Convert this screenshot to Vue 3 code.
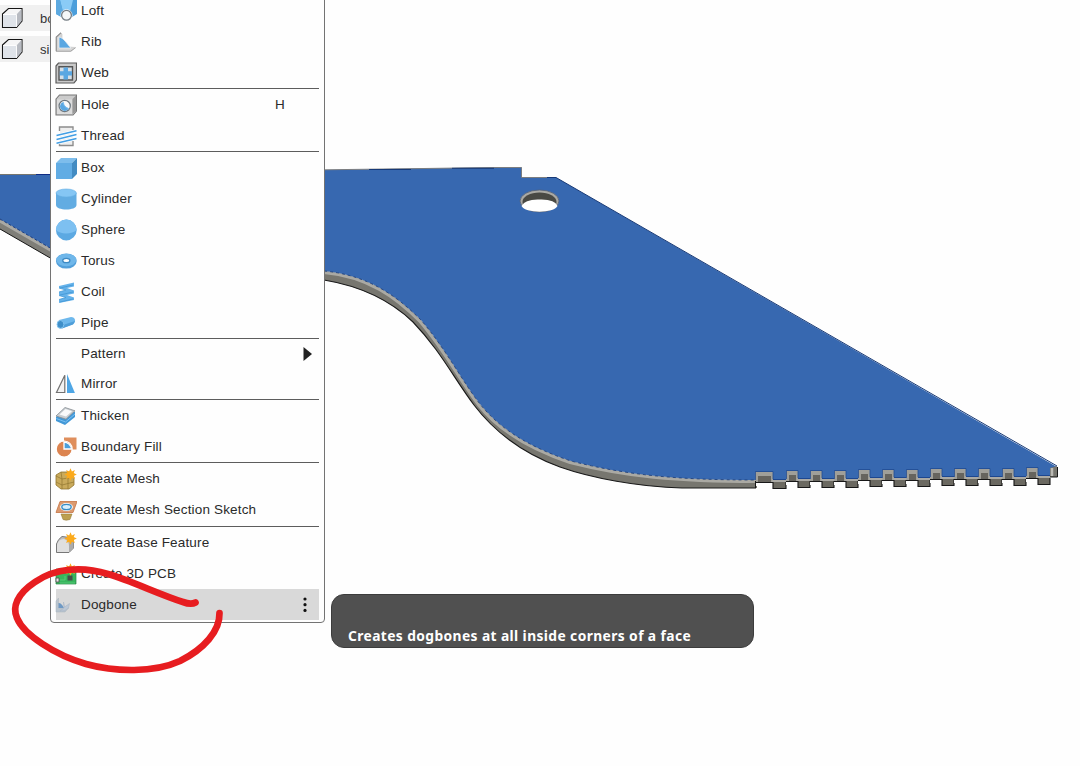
<script setup>
const blue = '#5aa7e2'
const light = '#86c5f4'
const p = (d, fill = 'none', stroke = 'none', w = 1) => ({ d, fill, stroke, w })
const circle = (x, y, r) => `M${x - r} ${y}a${r} ${r} 0 1 0 ${2 * r} 0a${r} ${r} 0 1 0 ${-2 * r} 0Z`
const ellipse = (x, y, a, b) => `M${x - a} ${y}a${a} ${b} 0 1 0 ${2 * a} 0a${a} ${b} 0 1 0 ${-2 * a} 0Z`
const star = p('M15.5 0.2l1.4 3.2 3-1.3-1.2 3 3.1 1.4-3.1 1.4 1.2 3-3-1.2-1.4 3-1.4-3-3 1.2 1.2-3-3-1.4 3-1.4-1.2-3 3 1.3Z', '#fbaa1c')

const icons = {
  loft: [p('M1 0H22V14L17 17H6L1 14Z', '#4b9edb'), p('M5 0H18L15.500 10H7.500Z', '#8acbf6'), p('M1 0H5L7.500 10 5.500 16 1 14Z', '#5ca9e0'), p(circle(11.5, 15.2, 6), '#fefefe'), p(circle(11.5, 15.2, 4.9), '#f5f7f8', '#757d84', 1.3)],
  rib: [p('M1 6L5.5 1.5 7 3V15.5L20.5 16.5 16 20.5H1Z', '#d6d6d6', '#c3c3c3', 0.6), p('M1.3 20V6L6 1.8', 'none', '#8f8f8f', 1.1), p('M1 20.2H15.5L20.5 16.8', 'none', '#a5a5a5', 0.9), p('M4 17V6C9 7 11.500 12.5 16 17Z', blue, '#f4f4f4', 0.7)],
  web: [p('M1 4L3.5 1H21.5V18L19 21H1Z', '#c9c9c9', '#5b5b5b', 1.2), p('M4 4.8H17.5V18H4Z', '#d5dfe7', '#555', 1.4), p('M8.5 5.5H13V9.2H17V13.6H13V17.4H8.5V13.6H4.8V9.2H8.5Z', blue)],
  hole: [p('M1 5L4.5 1H21.5V17L18 21H1Z', '#cbcbcb', '#777', 1.1), p('M2 5.5H17V20H2Z', '#dcdcdc'), p('M17.5 5L21 1.5V17L17.5 20Z', '#969696'), p(circle(9.7, 12, 5.6), '#fafafa', '#6d7881', 1.2), p('M5 13C5.2 9.5 7 8.5 8.6 8.1Q8.5 12.500 14 14.5C10.8 19 5.6 16.5 5 13Z', blue), p('M8.600 8.2Q8 12.8 13.8 14.8', 'none', light, 0.7)],
  thread: [p('M5 2H17.5V20.5H5Z', '#eeeeee'), p('M4.5 6V2H18V5M4.5 17V20.5H18V16', 'none', '#8c8c8c', 1.4), p('M1.5 10.6L21.5 5.8M1.5 14.4L21.5 9.6M1.5 18.2L21.5 13.4', 'none', '#fff', 3), p('M1.5 10.6L21.5 5.8M1.5 14.4L21.5 9.6M1.5 18.2L21.5 13.4', 'none', '#429ee4', 1.5)],
  box: [p('M1 6L6 1H22L17 6Z', '#7dbdec'), p('M1 6H17V22H1Z', '#61ace4'), p('M17 6L22 1V17L17 22Z', '#428bc2')],
  cylinder: [p('M1 5V17C1 23 21.5 23 21.5 17V5Z', '#62ace2'), p(ellipse(11.2, 5, 10.2, 4), '#85c6f4', '#66b0e4', 0.6)],
  sphere: [p(circle(11.3, 11, 10.4), '#5ca9e2'), p('M.9 11A10.4 10.4 0 0 1 21.7 11C17 15.5 5 15.5 .9 11Z', '#7dc0f1')],
  torus: [p(ellipse(11.3, 11, 10.4, 7.6), '#529fda'), p(ellipse(11.3, 10, 10, 6.2), '#6fb7ea'), p(ellipse(11.3, 10.5, 3.6, 2.2), '#fff', '#3d8ac4', 1.3)],
  coil: [p('M4 5L19 1.500V5.500L12 7 19 9.500V12.500L12 14 19 16.500V19L4 22V18.500L11 16.500 4 14.500V11L11 9 4 7Z', '#65b2ea'), p('M4 7L11 9 4 11M4 14.500L11 16.500 4 18.500', 'none', '#4599d6', 0.8), p('M5 7L18 4M5 14L18 11M5 21L18 18', 'none', '#4599d6', 0.9)],
  pipe: [p('M4 8L16 5C20.5 5 21.5 10 18 12.3L7 16.3Z', '#6eb8ec'), p('M5 14L20 9 18 12.5 7 16.5Z', '#4f9ed8'), p(ellipse(5.5, 12.4, 3.4, 3.9), '#3f8fc9', '#7ec1ee', 1)],
  mirror: [p('M9.8 2.3V19.5H1.5Z', '#f2f2f2', '#717171', 1.2), p('M12 1L19.9 20H12Z', '#4ea6e5')],
  thicken: [p('M1 12L9 4 20 7V12L10 20 1 16Z', '#4298d7'), p('M1 11L10 2.5 20 5.8 11 14.2Z', '#c9ced2', '#858b90', 0.8), p('M4.5 9.5L10.5 4 17 6.2 11 11.5Z', '#fafafa'), p('M1.3 13.5L10.5 17 20 9', 'none', '#7bc1f3', 1)],
  fill: [p('M9 1.5H21.5V13.5H9Z', '#df8e5c'), p(circle(9.2, 13, 8), '#dc8450', '#fff', 1.2), p('M9 13V6A8 8 0 0 1 16.500 13Z', '#4b9fda', '#fff', 1.3)],
  mesh: [p('M1 7L6 4 15 4 19 9V17L14 21 6 21 1 17Z', '#c9aa5b', '#92752e', 0.8), p('M1 8L7 11 19 9M7 11V21M1 14L7 17 19 14M13 10V21M6 4L7 11', 'none', '#91752f', 0.7), star],
  section: [p('M6 15H17L15 20.5Q11 22 8 20.5Z', '#bda04f', '#8d7230', 0.5), p('M5 2.5H22L18 13.5H1Z', '#db9a70', '#c57443', 0.8), p(ellipse(11.5, 8, 6.400, 4), '#fff'), p(ellipse(11.5, 8, 4.7, 2.6), '#d8effd', '#378cc4', 1.4)],
  base: [p('M1.500 12Q3 7 7 4.500L18.500 6V16L14 20.5H1.500Z', '#bdbdbd', '#777', 1), p('M2 20V13Q3 7 9 7Q14 9 14 14V20Z', '#dfdfdf'), p('M14 12L18.5 6V16L14 20Z', '#ababab'), star],
  pcb: [p('M1 6H21V21H1Z', '#37b65d', '#288445', 0.7), p('M1 15H4V19H1Z', '#e4e4e4', '#555', 0.9), p('M12.5 12.5H17.5V17.5H12.5Z', '#454f4a'), p('M5 17H10V13M5 20H20', 'none', '#59cc7b', 0.9), star],
  dogbone: [p('M1 7L3.500 4V14L13.5 14 10 18H1Z', '#b9c4ce', '#aab4bd', 0.5), p('M3.5 14V9C6 9 7.5 11 9 14Z', '#6f99c4'), p('M8.5 8L9.500 13 14.500 9.500 13.500 14Q10 18 5 17L9 14Z', '#bcc8d6', '#a6b3c2', 0.5)]
}

const groups = [
  { rows: [['Loft', 'loft'], ['Rib', 'rib'], ['Web', 'web']] },
  { rows: [['Hole', 'hole', 'H'], ['Thread', 'thread']] },
  { rows: [['Box', 'box'], ['Cylinder', 'cylinder'], ['Sphere', 'sphere'], ['Torus', 'torus'], ['Coil', 'coil'], ['Pipe', 'pipe']] },
  { rows: [['Pattern', ''], ['Mirror', 'mirror']], size: 'short' },
  { rows: [['Thicken', 'thicken'], ['Boundary Fill', 'fill']] },
  { rows: [['Create Mesh', 'mesh'], ['Create Mesh Section Sketch', 'section']], size: 'tall' },
  { rows: [['Create Base Feature', 'base'], ['Create 3D PCB', 'pcb'], ['Dogbone', 'dogbone']] }
]

const notches = Array.from({ length: 12 }, (_, i) => {
  const x = i === 0 ? 755 : 762 + i * 24
  const right = i === 0 ? 773 : x + 12
  return { x, w: right - x, y: Math.round(471.7 - i * 0.32), next: i === 11 ? 1050 : 786 + i * 24 }
})
</script>

<template>
  <main class="screen">
    <aside class="browser">
      <div v-for="name in ['bo', 'si']" :key="name" class="body-row">
        <svg width="24" height="22" viewBox="0 0 24 22">
          <path d="M2.5 7L8.5 1.5H22V14L16.5 20.5H2.5Z" fill="#f5f5f6" stroke="#151515" stroke-width="1.1" />
          <path d="M3 7.5H16V20H3Z" fill="#dfe3e9" /><path d="M16.5 7.5L21.5 2V14L16.5 20Z" fill="#b8bbc2" />
          <path d="M3 7.5H16.5V20" fill="none" stroke="#fff" stroke-width=".9" />
        </svg>
        <span>{{ name }}</span>
      </div>
    </aside>

    <svg class="model" width="1080" height="766" viewBox="0 0 1080 766">
      <path d="M0 219L52 249V259L0 229Z" fill="#7f7e78" />
      <path d="M0 229L52 259" fill="none" stroke="#151515" />
      <path d="M0 221L52 251" fill="none" stroke="#aaa9a4" stroke-width="3" />
      <path d="M0 174.5H52V249L0 219Z" fill="#3768b0" />
      <path d="M0 174.5H36" stroke="#77766f" /><path d="M36 174.5H52" stroke="#102c83" />
      <path d="M0 219L52 249" stroke="#193d82" stroke-dasharray="3 2" />

      <path d="M324 271C368 275 397 296 421 320C446 349 462 381 480 404C500 429 529 447 571 461C626 475 676 480 757 480V488H682C639 487 591 478 560 467C522 453 493 430 474 405C455 380 440 350 413 322C390 300 360 286 324 280Z" fill="#77766f" />
      <path d="M324 280C360 286 390 300 413 322C440 350 455 380 474 405C493 430 522 453 560 467C591 478 639 487 682 488H756" fill="none" stroke="#191919" stroke-width="1.1" />
      <path d="M324 272.5C368 276.5 396 297.5 420 321.5C445 350.5 461 382.5 479 405.5C499 430.5 528 448.5 570 462.5C625 476.5 676 481.5 756 481.5" fill="none" stroke="#aaa9a3" stroke-width="3" />
      <path d="M324 170L411 168.5 494 167.5H522V177.5H556L1057 467V475L1050 477H756V480C676 480 626 475 571 461C529 447 500 429 480 404C462 381 446 349 421 320C397 296 368 275 324 271Z" fill="#3768b0" />
      <path d="M324 169.8L411 168.7L494 167.5H521.5V177.5H547" fill="none" stroke="#7b7d80" />
      <path d="M369 169.5H411M452 168.3H494M547 177.5H556L1057 466" fill="none" stroke="#173976" />
      <path d="M324 271C368 275 397 296 421 320C446 349 462 381 480 404C500 429 529 447 571 461C626 475 676 480 756 480" fill="none" stroke="#193a76" stroke-width=".8" stroke-dasharray="3 3" />

      <g v-for="n in notches" :key="n.x">
        <rect :x="n.x + n.w" :y="n.y + 3" :width="n.next - n.x - n.w" height="6" fill="#3768b0" />
        <rect :x="n.x" :y="n.y + 10" :width="n.w" height="4" fill="#fefefe" />
        <rect :x="n.x" :y="n.y" :width="n.w" height="10" fill="#a09f99" />
        <rect :x="n.x + 3" :y="n.y + 4" :width="n.w - 5" height="6" fill="#66645e" />
        <path :d="`M${n.x + .5} ${n.y + 8}V${n.y - .5}H${n.x + n.w}V${n.y + 7}`" fill="none" stroke="#214b92" stroke-width=".8" />
        <rect :x="n.x + n.w" :y="n.y + 9" :width="n.next - n.x - n.w" height="8" fill="#6b6961" />
        <path :d="`M${n.x + n.w - 1} ${n.y + 9}H${n.next}`" stroke="#aaa9a4" stroke-width="2" />
        <path :d="`M${n.x + n.w} ${n.y + 7.5}H${n.next}`" stroke="#173f88" stroke-width=".8" />
        <path :d="`M${n.x} ${n.y + 10.5}H${n.x + n.w}V${n.y + 16.5}H${n.next}V${n.y + 10}`" fill="none" stroke="#171717" stroke-width="1.1" />
      </g>
      <path d="M755.5 481V488" stroke="#171717" />
      <path d="M1050 468L1057 466V477H1050Z" fill="#77766f" />
      <path d="M1050 477H1057.5V467" fill="none" stroke="#171717" />
      <path d="M1052 468V476" stroke="#bbbab4" stroke-width="2.5" />

      <ellipse cx="539.5" cy="201" rx="19.5" ry="11" fill="#aaa9a4" stroke="#526078" stroke-width=".8" />
      <ellipse cx="539.5" cy="202" rx="17" ry="9.5" fill="#494944" />
      <path d="M521.5 206Q525 199 539.5 199.5Q555 199 557.5 206C554 213.5 525 213.5 521.5 206Z" fill="white" />
    </svg>

    <nav class="menu">
      <section v-for="(group, i) in groups" :key="i" :class="['group', group.size]">
        <div v-for="[label, icon, key] in group.rows" :key="label" :class="['item', { selected: label === 'Dogbone' }]">
          <svg class="icon" viewBox="0 0 22 22">
            <path v-for="(shape, n) in icons[icon] || []" :key="n" :d="shape.d" :fill="shape.fill" :stroke="shape.stroke" :stroke-width="shape.w" />
          </svg>
          <span class="label">{{ label }}</span>
          <span v-if="key" class="shortcut">{{ key }}</span>
          <svg v-if="label === 'Pattern'" class="tail" viewBox="0 0 20 20"><path d="M6.5 3L15 10 6.5 17Z" fill="#222" /></svg>
          <svg v-if="label === 'Dogbone'" class="tail" viewBox="0 0 20 20"><circle v-for="y in [4, 9.7, 15.4]" :key="y" cx="8" :cy="y" r="1.6" fill="#111" /></svg>
        </div>
      </section>
    </nav>

    <div class="tooltip"><span>Creates dogbones at all inside corners of a face</span></div>

    <svg class="marker" width="1080" height="766" viewBox="0 0 1080 766">
      <path d="M195.5 602.5Q191 605 183 602C158 594 132 581 108 574C82 566 55 568 35 582C17 594 12 607 17 618C24 635 55 655 86 664C115 672 154 673 180 661C204 649 220 631 219.5 613" />
    </svg>
  </main>
</template>

<style>
body { overflow: hidden; background: #fefefe; }
</style>
<style scoped>
.screen { position: relative; width: 1080px; height: 766px; overflow: hidden; background: #fefefe; font-family: "Liberation Sans", Arial, sans-serif; }
.browser { display: flex; flex-direction: column; gap: 5px; width: 64px; padding-top: 5px; }
.body-row { display: flex; align-items: center; height: 26px; background: #f0f0f0; font-size: 13px; color: #333; white-space: nowrap; }
.body-row svg { flex: none; }
.body-row span { margin-left: 16px; }
.model, .marker { position: absolute; inset: 0; }
.marker path { fill: none; stroke: #e71d20; stroke-width: 6.7; stroke-linecap: round; stroke-linejoin: round; }
.menu { position: absolute; left: 50px; top: -9px; box-sizing: border-box; width: 275px; height: 632px; padding: 3px 5px 2px 4px; border: 1px solid #737373; border-radius: 4px; background: #fefefe; }
.group { border-bottom: 1px solid #5d5d5d; margin-left: 1px; }
.group:last-child { border: 0; }
.item { display: flex; align-items: center; height: 31px; color: #2a2a2a; font-size: 13.5px; letter-spacing: .16px; line-height: 18px; }
.short .item { height: 30px; }
.tall .item { height: 31.5px; }
.selected { background: #d9d9d9; }
.icon { width: 22px; height: 22px; margin-left: -1px; flex: none; }
.label { margin-left: 4px; flex: 1; white-space: nowrap; }
.shortcut { width: 44px; }
.tail { width: 20px; height: 20px; margin-right: 2px; }
.tooltip { position: absolute; left: 331px; top: 594px; box-sizing: border-box; width: 423px; height: 54px; display: flex; align-items: flex-end; padding: 0 16px 3px; border: 1px solid #3c3c3c; border-radius: 13px; background: #505050; color: #fff; font: bold 13.8px/17px "Noto Sans", sans-serif; letter-spacing: .4px; white-space: nowrap; }
</style>
